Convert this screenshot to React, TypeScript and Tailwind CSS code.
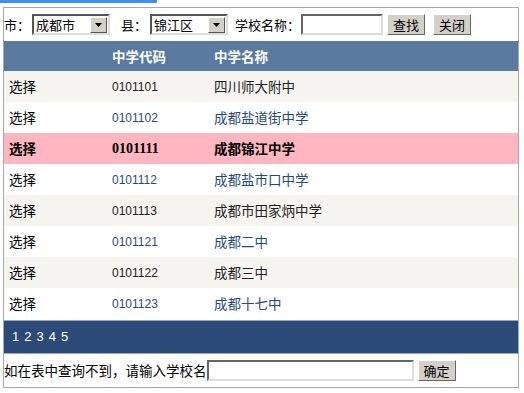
const rows = [
  { code: '0101101', name: '四川师大附中' },
  { code: '0101102', name: '成都盐道街中学' },
  { code: '0101111', name: '成都锦江中学', selected: true },
  { code: '0101112', name: '成都盐市口中学' },
  { code: '0101113', name: '成都市田家炳中学' },
  { code: '0101121', name: '成都二中' },
  { code: '0101122', name: '成都三中' },
  { code: '0101123', name: '成都十七中' },
];

const cjk = "font-['Noto_Sans_CJK_SC','Noto_Sans',sans-serif]";

function FakeSelect({ value }: { value: string }) {
  return (
    <div className="flex h-[21px] w-[78px] items-center border-2 border-t-[#555] border-l-[#555] border-r-[#ddd] border-b-[#ddd] bg-white">
      <span className="flex-1 pl-[2px] text-[13px] leading-none text-black">{value}</span>
      <span className="mr-[1px] flex h-[16px] w-[17px] items-center justify-center border border-t-white border-l-white border-r-[#555] border-b-[#555] bg-[#d4d0c8]">
        <svg width="7" height="4" viewBox="0 0 7 4">
          <path d="M0 0h7L3.5 4z" fill="#000" />
        </svg>
      </span>
    </div>
  );
}

function Btn({ label }: { label: string }) {
  return (
    <button
      type="button"
      className="h-[21px] border border-t-white border-l-white border-r-[#666] border-b-[#666] bg-[#d4d0c8] px-[5px] text-[13px] leading-none text-black"
    >
      {label}
    </button>
  );
}

export default function App() {
  return (
    <div className={`h-[393px] w-[524px] bg-white text-[13.5px] ${cjk}`}>
      <div className="h-[3px] w-[157px] bg-[#3d8ff0]" />
      <div className="ml-[3px] mt-[4px] w-[516px] border border-[#a8a8a8]">
        <div className="flex h-[33px] items-center text-[13px] text-black">
          <span>市：</span>
          <div className="ml-[2px]">
            <FakeSelect value="成都市" />
          </div>
          <span className="ml-[11px]">县：</span>
          <div className="ml-[3px]">
            <FakeSelect value="锦江区" />
          </div>
          <span className="ml-[7px]">学校名称：</span>
          <input className="ml-[1px] h-[21px] w-[82px] border-2 border-t-[#666] border-l-[#666] border-r-[#ddd] border-b-[#ddd] bg-white outline-none" />
          <div className="ml-[4px]">
            <Btn label="查找" />
          </div>
          <div className="ml-[8px]">
            <Btn label="关闭" />
          </div>
        </div>
        <div className="flex h-[30px] items-center bg-[#5a7aa0] font-bold text-white">
          <span className="w-[108px]" />
          <span className="w-[102px]">中学代码</span>
          <span>中学名称</span>
        </div>
        {rows.map((r, i) => {
          const bg = r.selected ? 'bg-[#ffb6c1]' : i % 2 === 0 ? 'bg-[#f5f4ef]' : 'bg-white';
          const color = r.selected ? 'text-black' : i % 2 === 0 ? 'text-[#222]' : 'text-[#1f4a80]';
          const codeFont = r.selected
            ? "font-['Liberation_Serif',serif] text-[14px]"
            : "font-['Liberation_Sans',sans-serif] text-[12px]";
          return (
            <div key={r.code} className={`flex h-[31px] items-center ${bg} ${r.selected ? 'font-bold' : ''}`}>
              <span className="w-[108px] pl-[5px] text-black">选择</span>
              <span className={`w-[102px] ${codeFont} ${color}`}>{r.code}</span>
              <span className={color}>{r.name}</span>
            </div>
          );
        })}
        <div className="mt-[1px] flex h-[34px] items-center gap-[5px] border-y border-[#9aa8bb] bg-[#2b4a77] pl-[8px] font-['Liberation_Sans',sans-serif] text-[13px] text-white">
          <span>1</span>
          <span>2</span>
          <span>3</span>
          <span>4</span>
          <span>5</span>
        </div>
        <div className="flex h-[33px] items-center">
          <span>如在表中查询不到，请输入学校名</span>
          <input className="h-[21px] w-[207px] border-2 border-t-[#666] border-l-[#666] border-r-[#ddd] border-b-[#ddd] bg-white outline-none" />
          <div className="ml-[4px]">
            <Btn label="确定" />
          </div>
        </div>
      </div>
    </div>
  );
}
